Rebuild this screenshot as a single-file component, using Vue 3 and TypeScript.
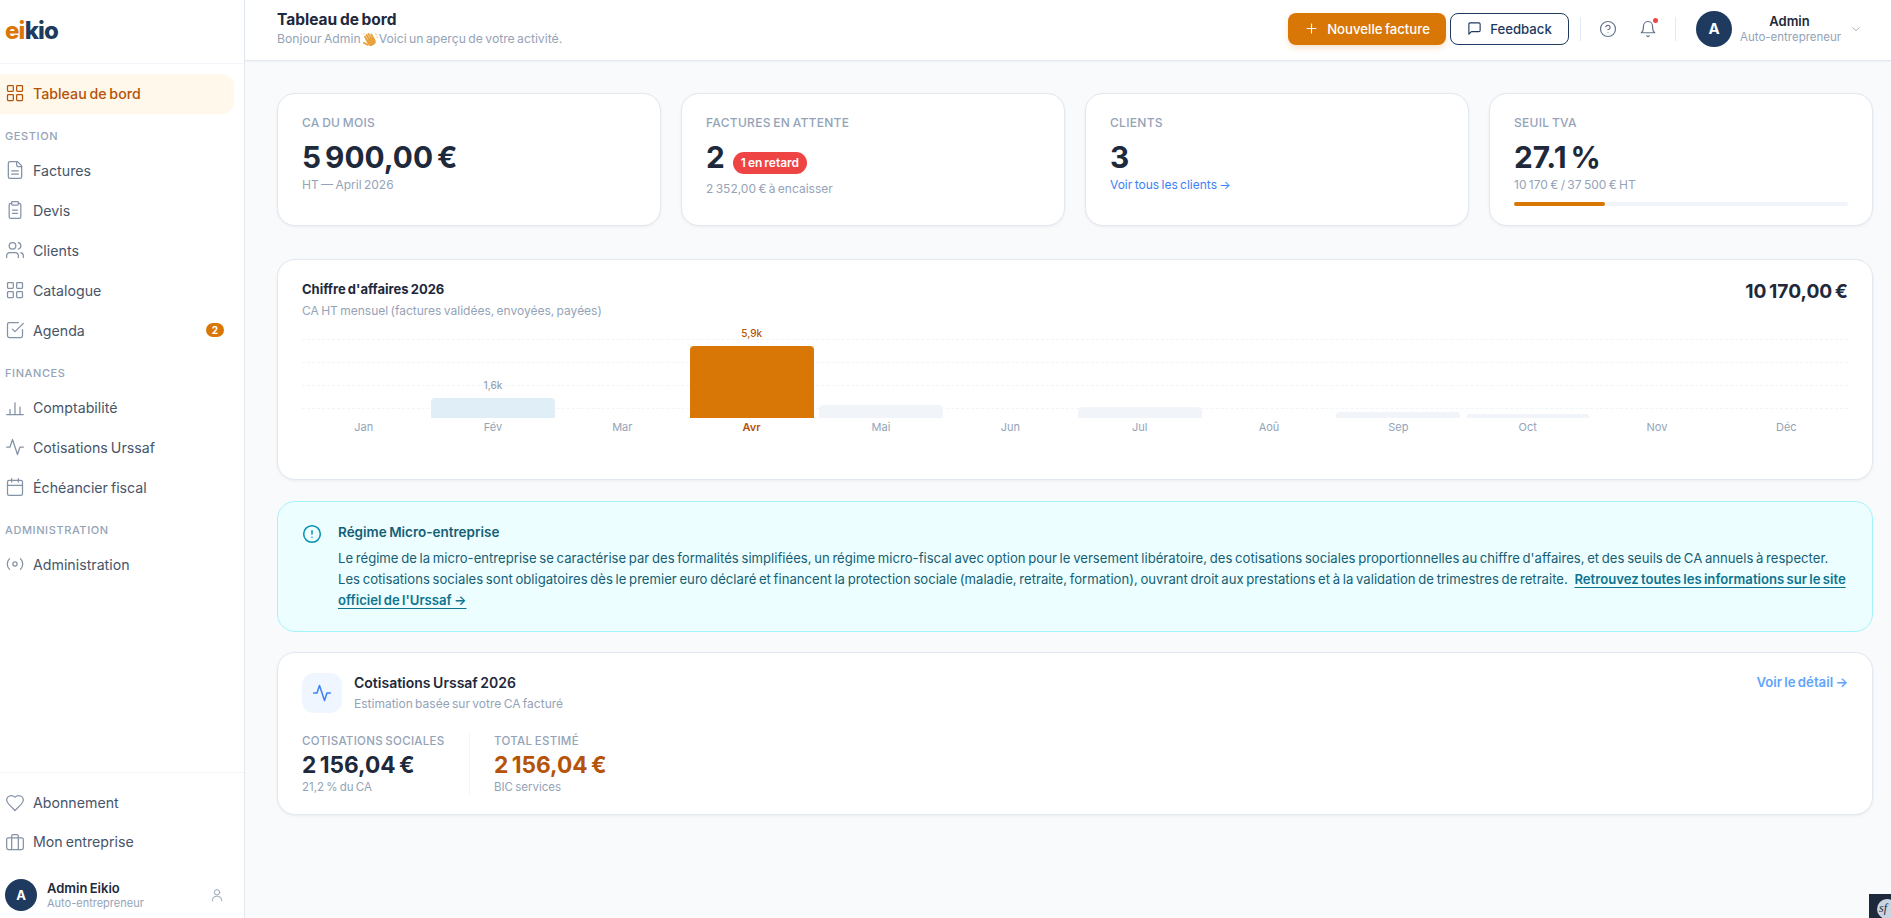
<script setup lang="ts">
type NavItem = { label: string; icon: string; active?: boolean; badge?: string }
type NavGroup = { title?: string; items: NavItem[] }

const icons: Record<string, string> = {
  grid: '<rect x="3" y="3" width="7" height="7" rx="1"/><rect x="14" y="3" width="7" height="7" rx="1"/><rect x="14" y="14" width="7" height="7" rx="1"/><rect x="3" y="14" width="7" height="7" rx="1"/>',
  file: '<path d="M15 2H6a2 2 0 0 0-2 2v16a2 2 0 0 0 2 2h12a2 2 0 0 0 2-2V7z"/><path d="M14 2v4a2 2 0 0 0 2 2h4"/><path d="M16 13H8"/><path d="M16 17H8"/>',
  clipboard: '<rect x="8" y="2" width="8" height="4" rx="1"/><path d="M16 4h1a2 2 0 0 1 2 2v14a2 2 0 0 1-2 2H7a2 2 0 0 1-2-2V6a2 2 0 0 1 2-2h1"/><path d="M9 12h6"/><path d="M9 16h6"/>',
  users: '<path d="M16 21v-2a4 4 0 0 0-4-4H6a4 4 0 0 0-4 4v2"/><circle cx="9" cy="7" r="4"/><path d="M22 21v-2a4 4 0 0 0-3-3.87"/><path d="M16 3.13a4 4 0 0 1 0 7.75"/>',
  check: '<path d="M21 11.5V19a2 2 0 0 1-2 2H5a2 2 0 0 1-2-2V5a2 2 0 0 1 2-2h11"/><path d="m9 11 3 3L22 4"/>',
  bars: '<path d="M2 21h20"/><path d="M6 21v-6"/><path d="M12 21V7"/><path d="M18 21v-9"/>',
  activity: '<path d="M22 12h-4l-3 9L9 3l-3 9H2"/>',
  calendar: '<rect x="3" y="4" width="18" height="18" rx="2"/><path d="M16 2v4"/><path d="M8 2v4"/><path d="M3 10h18"/>',
  radio: '<circle cx="12" cy="12" r="2.5"/><path d="M5.5 5.5a9 9 0 0 0 0 13"/><path d="M18.5 18.5a9 9 0 0 0 0-13"/>',
  heart: '<path d="M19 14c1.5-1.5 3-3.2 3-5.5A5.5 5.5 0 0 0 16.5 3c-1.8 0-3 .5-4.5 2-1.5-1.5-2.7-2-4.500-2A5.500 5.500 0 0 0 2 8.500c0 2.300 1.500 4 3 5.500l7 7z"/>',
  briefcase: '<rect x="2" y="7" width="20" height="14" rx="2"/><path d="M16 21V5a2 2 0 0 0-2-2h-4a2 2 0 0 0-2 2v16"/>',
  user: '<circle cx="12" cy="8" r="4"/><path d="M5 21v-1a6 6 0 0 1 6-6h2a6 6 0 0 1 6 6v1"/>',
}

const groups: NavGroup[] = [
  { items: [{ label: 'Tableau de bord', icon: 'grid', active: true }] },
  {
    title: 'Gestion',
    items: [
      { label: 'Factures', icon: 'file' },
      { label: 'Devis', icon: 'clipboard' },
      { label: 'Clients', icon: 'users' },
      { label: 'Catalogue', icon: 'grid' },
      { label: 'Agenda', icon: 'check', badge: '2' },
    ],
  },
  {
    title: 'Finances',
    items: [
      { label: 'Comptabilité', icon: 'bars' },
      { label: 'Cotisations Urssaf', icon: 'activity' },
      { label: 'Échéancier fiscal', icon: 'calendar' },
    ],
  },
  { title: 'Administration', items: [{ label: 'Administration', icon: 'radio' }] },
]

const footerItems: NavItem[] = [
  { label: 'Abonnement', icon: 'heart' },
  { label: 'Mon entreprise', icon: 'briefcase' },
]

const months = [
  { name: 'Jan', height: 0 },
  { name: 'Fév', height: 20, value: '1,6k', tone: 'blue' },
  { name: 'Mar', height: 0 },
  { name: 'Avr', height: 72, value: '5,9k', tone: 'current' },
  { name: 'Mai', height: 13 },
  { name: 'Jun', height: 0 },
  { name: 'Jul', height: 11 },
  { name: 'Aoû', height: 0 },
  { name: 'Sep', height: 6 },
  { name: 'Oct', height: 4 },
  { name: 'Nov', height: 0 },
  { name: 'Déc', height: 0 },
]
</script>

<template>
  <div class="layout">
    <aside class="sidebar">
      <div class="logo"><span class="logo-accent">ei</span>kio</div>

      <nav class="nav">
        <template v-for="group in groups" :key="group.title ?? 'main'">
          <div v-if="group.title" class="nav-title">{{ group.title }}</div>
          <a
            v-for="item in group.items"
            :key="item.label"
            :class="['nav-item', { active: item.active }]"
          >
            <svg class="nav-icon" viewBox="0 0 24 24" v-html="icons[item.icon]"></svg>
            <span class="nav-label">{{ item.label }}</span>
            <span v-if="item.badge" class="nav-badge">{{ item.badge }}</span>
          </a>
        </template>
      </nav>

      <div class="side-footer">
        <a v-for="item in footerItems" :key="item.label" class="nav-item foot-item">
          <svg class="nav-icon" viewBox="0 0 24 24" v-html="icons[item.icon]"></svg>
          <span class="nav-label">{{ item.label }}</span>
        </a>
        <div class="side-user">
          <div class="avatar small">A</div>
          <div class="side-user-text">
            <div class="side-user-name">Admin Eikio</div>
            <div class="side-user-role">Auto-entrepreneur</div>
          </div>
          <svg class="side-user-icon" viewBox="0 0 24 24" v-html="icons.user"></svg>
        </div>
      </div>
    </aside>

    <div class="main">
      <header class="topbar">
        <div class="topbar-title">
          <h1>Tableau de bord</h1>
          <p>
            <span>Bonjour Admin</span>
            <svg class="wave" viewBox="0 0 16 14">
              <g transform="rotate(-28 8 8)" fill="#e8a33d">
                <rect x="4.200" y="1.800" width="1.900" height="8" rx="0.950" />
                <rect x="6.400" y="0.800" width="1.900" height="8" rx="0.950" />
                <rect x="8.600" y="1.200" width="1.900" height="8" rx="0.950" />
                <rect x="10.800" y="2.800" width="1.900" height="7" rx="0.950" />
                <rect x="4.200" y="6" width="8.500" height="8" rx="3.500" />
                <rect x="1.200" y="6.600" width="1.900" height="6" rx="0.950" transform="rotate(-35 2 9)" />
              </g>
              <path d="M13.600 1.600l1 1.500M14.600 5.200l1 .2M1 2.500l.9-1" stroke="#e8a33d" stroke-width="0.900" fill="none" />
            </svg>
            <span>Voici un aperçu de votre activité.</span>
          </p>
        </div>

        <div class="topbar-actions">
          <button class="btn btn-primary">
            <svg class="btn-icon" viewBox="0 0 24 24"><path d="M5 12h14" /><path d="M12 5v14" /></svg>
            Nouvelle facture
          </button>
          <button class="btn btn-outline">
            <svg class="btn-icon" viewBox="0 0 24 24"><path d="M21 15a2 2 0 0 1-2 2H7l-4 4V5a2 2 0 0 1 2-2h14a2 2 0 0 1 2 2z" /></svg>
            Feedback
          </button>
          <span class="vsep"></span>
          <svg class="top-icon help" viewBox="0 0 24 24">
            <circle cx="12" cy="12" r="10" />
            <path d="M9.100 9a3 3 0 0 1 5.800 1c0 2-3 3-3 3" />
            <path d="M12 17h.01" />
          </svg>
          <span class="bell-wrap">
            <svg class="top-icon" viewBox="0 0 24 24">
              <path d="M6 8a6 6 0 0 1 12 0c0 7 3 9 3 9H3s3-2 3-9" />
              <path d="M10.300 21a1.900 1.900 0 0 0 3.400 0" />
            </svg>
            <span class="bell-dot"></span>
          </span>
          <span class="vsep second"></span>
          <div class="avatar">A</div>
          <div class="top-user">
            <div class="top-user-name">Admin</div>
            <div class="top-user-role">Auto-entrepreneur</div>
          </div>
          <svg class="chevron" viewBox="0 0 24 24"><path d="m6 9 6 6 6-6" /></svg>
        </div>
      </header>

      <main class="content">
        <section class="stats">
          <div class="card stat">
            <div class="stat-label">CA du mois</div>
            <div class="stat-value">5 900,00 €</div>
            <div class="stat-sub">HT — April 2026</div>
          </div>
          <div class="card stat">
            <div class="stat-label">Factures en attente</div>
            <div class="stat-value">2 <span class="late">1 en retard</span></div>
            <div class="stat-sub lower">2 352,00 € à encaisser</div>
          </div>
          <div class="card stat">
            <div class="stat-label">Clients</div>
            <div class="stat-value">3</div>
            <a class="stat-link">Voir tous les clients →</a>
          </div>
          <div class="card stat">
            <div class="stat-label">Seuil TVA</div>
            <div class="stat-value">27.1 %</div>
            <div class="stat-sub">10 170 € / 37 500 € HT</div>
            <div class="progress"><div class="progress-fill" :style="{ width: '27.1%' }"></div></div>
          </div>
        </section>

        <section class="card chart-card">
          <div class="chart-head">
            <div>
              <h2>Chiffre d'affaires 2026</h2>
              <p>CA HT mensuel (factures validées, envoyées, payées)</p>
            </div>
            <div class="chart-total">10 170,00 €</div>
          </div>
          <div class="chart">
            <div class="grid-lines"><i></i><i></i><i></i><i></i></div>
            <div class="plot">
              <div v-for="m in months" :key="m.name" class="month">
                <div class="bar-area">
                  <span v-if="m.value" :class="['bar-value', m.tone]">{{ m.value }}</span>
                  <div
                    v-if="m.height"
                    :class="['bar', m.tone]"
                    :style="{ height: m.height + 'px' }"
                  ></div>
                </div>
                <span :class="['month-name', m.tone]">{{ m.name }}</span>
              </div>
            </div>
          </div>
        </section>

        <section class="info">
          <svg class="info-icon" viewBox="0 0 24 24">
            <circle cx="12" cy="12" r="10" />
            <path d="M12 8v4" />
            <path d="M12 16h.01" />
          </svg>
          <div class="info-body">
            <h3>Régime Micro-entreprise</h3>
            <p>
              Le régime de la micro-entreprise se caractérise par des formalités simplifiées, un régime micro-fiscal avec option pour le versement libératoire, des cotisations sociales proportionnelles au chiffre d'affaires, et des seuils de CA annuels à respecter.<br />
              Les cotisations sociales sont obligatoires dès le premier euro déclaré et financent la protection sociale (maladie, retraite, formation), ouvrant droit aux prestations et à la validation de trimestres de retraite.
              <a>Retrouvez toutes les informations sur le site<br />officiel de l'Urssaf →</a>
            </p>
          </div>
        </section>

        <section class="card urssaf">
          <div class="urssaf-head">
            <div class="urssaf-icon">
              <svg viewBox="0 0 24 24" v-html="icons.activity"></svg>
            </div>
            <div class="urssaf-title">
              <h2>Cotisations Urssaf 2026</h2>
              <p>Estimation basée sur votre CA facturé</p>
            </div>
            <a class="urssaf-link">Voir le détail →</a>
          </div>
          <div class="urssaf-stats">
            <div class="urssaf-stat">
              <div class="u-label">Cotisations sociales</div>
              <div class="u-value">2 156,04 €</div>
              <div class="u-sub">21,2 % du CA</div>
            </div>
            <div class="urssaf-stat total">
              <div class="u-label">Total estimé</div>
              <div class="u-value">2 156,04 €</div>
              <div class="u-sub">BIC services</div>
            </div>
          </div>
        </section>
      </main>
    </div>

    <div class="sf-toolbar"><span>sf</span></div>
  </div>
</template>

<style>
html,
body {
  margin: 0;
  height: 100%;
  overflow: hidden;
  background: #f8fafc;
}
</style>

<style scoped>
.layout {
  display: flex;
  height: 918px;
  font-family: 'Inter', 'Noto Sans', sans-serif;
  color: #1e293b;
  background: #f8fafc;
  word-spacing: -1px;
}

/* Sidebar */
.sidebar {
  width: 244px;
  flex-shrink: 0;
  display: flex;
  flex-direction: column;
  background: #fff;
  border-right: 1px solid #e2e8f0;
}

.logo {
  height: 63px;
  padding-left: 5px;
  border-bottom: 1px solid #f1f5f9;
  font-size: 24px;
  font-weight: 800;
  line-height: 62px;
  letter-spacing: -0.8px;
  color: #1e3a5f;
}

.logo-accent {
  color: #d97706;
}

.nav {
  flex: 1;
  padding-top: 10px;
}

.nav-title {
  padding: 16px 5px 8px;
  font-size: 11px;
  line-height: 13px;
  font-weight: 500;
  letter-spacing: 0.6px;
  text-transform: uppercase;
  color: #94a3b8;
}

.nav-item {
  display: flex;
  align-items: center;
  gap: 8px;
  height: 40px;
  margin-right: 10px;
  padding: 0 10px 2px 5px;
  box-sizing: border-box;
  border-radius: 0 12px 12px 0;
  font-size: 14.2px;
  color: #475569;
}

.nav-item.active {
  background: #fff8eb;
  color: #b45309;
  font-weight: 500;
}

.nav-icon {
  width: 20px;
  height: 20px;
  flex-shrink: 0;
  fill: none;
  stroke: #8492a6;
  stroke-width: 1.5;
  stroke-linecap: round;
  stroke-linejoin: round;
}

.active .nav-icon {
  stroke: #b45309;
}

.nav-label {
  flex: 1;
  white-space: nowrap;
}

.nav-badge {
  width: 18px;
  height: 14px;
  border-radius: 7px;
  background: #d97706;
  color: #fff;
  font-size: 10px;
  font-weight: 700;
  line-height: 14px;
  text-align: center;
}

.side-footer {
  padding-top: 11px;
  border-top: 1px solid #f1f5f9;
}

.foot-item {
  height: 39px;
}

.side-user {
  display: flex;
  align-items: center;
  gap: 10px;
  padding: 17px 10px 7px 5px;
}

.side-user-text {
  flex: 1;
}

.side-user-name {
  font-size: 13px;
  font-weight: 600;
  line-height: 16px;
  color: #1e293b;
}

.side-user-role {
  font-size: 11px;
  line-height: 14px;
  color: #94a3b8;
}

.side-user-icon {
  width: 16px;
  height: 16px;
  fill: none;
  stroke: #94a3b8;
  stroke-width: 1.5;
  stroke-linecap: round;
  margin-right: 9px;
}

.avatar {
  width: 36px;
  height: 36px;
  flex-shrink: 0;
  border-radius: 50%;
  background: #1e3a5f;
  color: #fff;
  font-size: 15px;
  font-weight: 700;
  line-height: 36px;
  text-align: center;
}

.avatar.small {
  width: 32px;
  height: 32px;
  font-size: 13px;
  line-height: 32px;
}

/* Top bar */
.main {
  flex: 1;
  min-width: 0;
  display: flex;
  flex-direction: column;
}

.topbar {
  height: 61px;
  flex-shrink: 0;
  box-sizing: border-box;
  display: flex;
  align-items: center;
  justify-content: space-between;
  padding: 0 28px 3px 32px;
  background: #fff;
  border-bottom: 1px solid #e2e8f0;
  box-shadow: 0 1px 2px rgba(15, 23, 42, 0.04);
}

.topbar-title h1 {
  margin: 0;
  font-size: 15.5px;
  font-weight: 700;
  line-height: 20px;
  color: #1e293b;
}

.topbar-title p {
  display: flex;
  align-items: center;
  gap: 1px;
  margin: 0;
  font-size: 12.2px;
  line-height: 17px;
  color: #94a3b8;
}

.wave {
  width: 16px;
  height: 14px;
}

.topbar-actions {
  display: flex;
  align-items: center;
}

.btn {
  display: flex;
  align-items: center;
  justify-content: center;
  gap: 8px;
  height: 32px;
  box-sizing: border-box;
  border-radius: 8px;
  font-family: inherit;
  font-size: 13.2px;
  font-weight: 500;
  word-spacing: inherit;
}

.btn-icon {
  width: 15px;
  height: 15px;
  fill: none;
  stroke: currentColor;
  stroke-width: 1.8;
  stroke-linecap: round;
  stroke-linejoin: round;
}

.btn-primary {
  width: 158px;
  border: none;
  background: #d97706;
  color: #fff;
  box-shadow: 0 3px 6px rgba(217, 119, 6, 0.2);
}

.btn-outline {
  width: 119px;
  margin-left: 4px;
  border: 1px solid #1e3a5f;
  background: #fff;
  color: #1e3a5f;
}

.vsep {
  width: 1px;
  height: 24px;
  margin: 0 18px 0 11px;
  background: #e2e8f0;
}

.vsep.second {
  margin: 0 20px 0 18px;
}

.top-icon {
  display: block;
  width: 18px;
  height: 18px;
  fill: none;
  stroke: #64748b;
  stroke-width: 1.6;
  stroke-linecap: round;
  stroke-linejoin: round;
}

.help {
  margin-right: 22px;
}

.bell-wrap {
  position: relative;
  display: block;
}

.bell-dot {
  position: absolute;
  top: -2px;
  right: -1px;
  width: 5px;
  height: 5px;
  border-radius: 50%;
  background: #ef4444;
}

.top-user {
  width: 99px;
  margin-left: 8px;
  text-align: center;
  white-space: nowrap;
}

.top-user-name {
  font-size: 13px;
  font-weight: 600;
  line-height: 16px;
}

.top-user-role {
  font-size: 11.5px;
  line-height: 16px;
  color: #94a3b8;
}

.chevron {
  width: 14px;
  height: 14px;
  margin-left: 10px;
  fill: none;
  stroke: #94a3b8;
  stroke-width: 1.5;
}

/* Content */
.content {
  flex: 1;
  display: flex;
  flex-direction: column;
  gap: 20px;
  padding: 32px 18px 0 32px;
}

.card {
  box-sizing: border-box;
  background: #fff;
  border: 1px solid #e2e8f0;
  border-radius: 18px;
  box-shadow: 0 1px 3px rgba(15, 23, 42, 0.06);
}

.stats {
  display: grid;
  grid-template-columns: repeat(4, 1fr);
  gap: 20px;
  margin-bottom: 13px;
}

.stat {
  height: 133px;
  padding: 21px 24px 0;
}

.stat-label {
  font-size: 12px;
  line-height: 16px;
  font-weight: 500;
  letter-spacing: 0.3px;
  text-transform: uppercase;
  color: #94a3b8;
}

.stat-value {
  display: flex;
  align-items: center;
  gap: 8px;
  margin-top: 8px;
  font-size: 29.8px;
  font-weight: 700;
  line-height: 36px;
  word-spacing: -3px;
  color: #1e293b;
}

.late {
  display: inline-block;
  height: 22px;
  margin-top: 12px;
  padding: 0 8px;
  border-radius: 11px;
  background: #ef4444;
  color: #fff;
  font-size: 12px;
  font-weight: 600;
  line-height: 22px;
  word-spacing: -1px;
}

.stat-sub,
.stat-link {
  display: block;
  margin-top: 1px;
  font-size: 12px;
  line-height: 18px;
  color: #94a3b8;
}

.stat-sub.lower {
  margin-top: 5px;
}

.stat-link {
  color: #3b82f6;
}

.progress {
  height: 4px;
  margin-top: 8px;
  border-radius: 2px;
  background: #f1f5f9;
}

.progress-fill {
  height: 100%;
  border-radius: 2px;
  background: #d97706;
}

/* Chart */
.chart-card {
  height: 221px;
  padding: 20px 24px 0;
}

.chart-head {
  display: flex;
  justify-content: space-between;
}

.chart-head h2 {
  margin: 0;
  font-size: 13px;
  font-weight: 700;
  line-height: 18px;
}

.chart-head p {
  margin: 4px 0 0;
  font-size: 12px;
  line-height: 18px;
  color: #94a3b8;
}

.chart-total {
  font-size: 19.2px;
  font-weight: 700;
  line-height: 22px;
  word-spacing: -2px;
}

.chart {
  position: relative;
  margin-top: 6px;
}

.grid-lines {
  position: absolute;
  top: 13px;
  left: 0;
  right: 0;
  display: flex;
  flex-direction: column;
  gap: 22px;
}

.grid-lines i {
  display: block;
  border-top: 1px dashed #f1f5f9;
}

.plot {
  position: relative;
  display: grid;
  grid-template-columns: repeat(12, 1fr);
  margin: 0 -3px;
}

.month {
  display: flex;
  flex-direction: column;
  align-items: center;
}

.bar-area {
  width: 100%;
  height: 92px;
  padding: 0 2.6px;
  box-sizing: border-box;
  display: flex;
  flex-direction: column;
  justify-content: flex-end;
  align-items: center;
}

.bar-value {
  flex-shrink: 0;
  margin-bottom: 7px;
  font-size: 10px;
  line-height: 12px;
  font-weight: 500;
  color: #94a3b8;
}

.bar-value.current {
  color: #b45309;
}

.bar {
  flex-shrink: 0;
  width: 100%;
  border-radius: 4px 4px 0 0;
  background: #f1f5f9;
}

.bar.blue {
  background: #e0eef7;
}

.bar.current {
  background: #d97706;
}

.month-name {
  margin-top: 1px;
  font-size: 11px;
  line-height: 16px;
  color: #94a3b8;
}

.month-name.current {
  color: #b45309;
  font-weight: 600;
}

/* Info */
.info {
  height: 131px;
  box-sizing: border-box;
  display: flex;
  gap: 16px;
  margin-top: 1px;
  padding: 20px 24px 0;
  border: 1px solid #a5f3fc;
  border-radius: 18px;
  background: #ecfeff;
}

.info-icon {
  width: 20px;
  height: 20px;
  margin-top: 2px;
  flex-shrink: 0;
  fill: none;
  stroke: #0891b2;
  stroke-width: 1.8;
  stroke-linecap: round;
}

.info h3 {
  margin: 0;
  font-size: 13.5px;
  font-weight: 600;
  line-height: 20px;
  color: #155e75;
}

.info p {
  margin: 6px 0 0;
  font-size: 13.13px;
  line-height: 21px;
  white-space: nowrap;
  color: #155e75;
}

.info a {
  margin-left: 4px;
  font-weight: 600;
  color: #0e7490;
  text-decoration: underline;
  text-underline-offset: 3px;
}

/* Urssaf */
.urssaf {
  height: 163px;
  padding: 20px 24px 0;
}

.urssaf-head {
  display: flex;
  gap: 12px;
}

.urssaf-icon {
  width: 40px;
  height: 40px;
  display: flex;
  align-items: center;
  justify-content: center;
  border-radius: 12px;
  background: #eff6ff;
}

.urssaf-icon svg {
  width: 20px;
  height: 20px;
  fill: none;
  stroke: #3b82f6;
  stroke-width: 1.8;
  stroke-linecap: round;
  stroke-linejoin: round;
}

.urssaf-title {
  flex: 1;
}

.urssaf-title h2 {
  margin: 0;
  font-size: 14px;
  font-weight: 600;
  line-height: 20px;
}

.urssaf-title p {
  margin: 2px 0 0;
  font-size: 12px;
  line-height: 18px;
  color: #94a3b8;
}

.urssaf-link {
  font-size: 13.2px;
  font-weight: 600;
  line-height: 18px;
  color: #60a5fa;
}

.urssaf-stats {
  display: flex;
  margin-top: 20px;
}

.urssaf-stat {
  width: 167px;
  height: 62px;
  border-right: 1px solid #f1f5f9;
}

.urssaf-stat.total {
  padding-left: 24px;
  border-right: none;
}

.u-label {
  font-size: 11.5px;
  font-weight: 500;
  line-height: 16px;
  letter-spacing: 0.3px;
  text-transform: uppercase;
  color: #94a3b8;
}

.u-value {
  margin-top: 1px;
  font-size: 22.7px;
  font-weight: 700;
  line-height: 29px;
  word-spacing: -2px;
  white-space: nowrap;
}

.total .u-value {
  color: #b45309;
}

.u-sub {
  margin-top: 1px;
  font-size: 11.5px;
  line-height: 14px;
  color: #94a3b8;
}

.sf-toolbar {
  position: fixed;
  right: 0;
  bottom: 0;
  width: 22px;
  height: 24px;
  background: #1e293b;
  overflow: hidden;
}

.sf-toolbar span {
  display: block;
  width: 20px;
  height: 20px;
  margin: 5px 0 0 8px;
  border-radius: 50%;
  background: #cbd5e1;
  color: #1e293b;
  font-family: 'Liberation Serif', serif;
  font-style: italic;
  font-size: 12px;
  line-height: 18px;
  text-indent: 2px;
}
</style>
